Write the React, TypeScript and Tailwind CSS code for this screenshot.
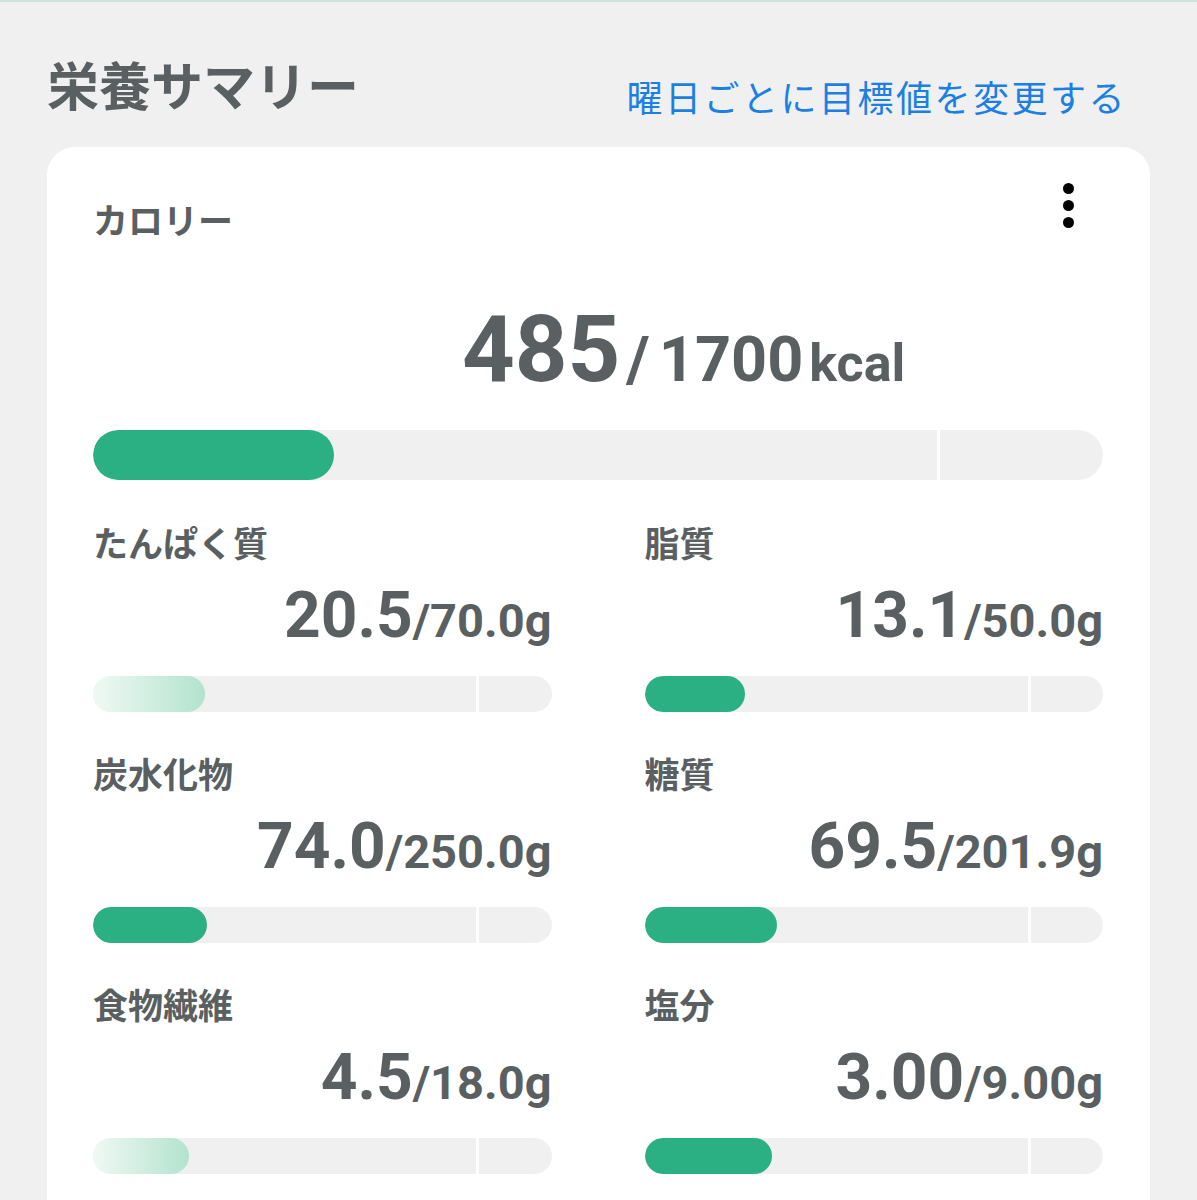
import React from "react";

type Item = {
  label: string;
  v: string;
  t: string;
  val: number;
  target: number;
  soft?: boolean;
};

const items: Item[] = [
  { label: "たんぱく質", v: "20.5", t: "70.0", val: 20.5, target: 70, soft: true },
  { label: "脂質", v: "13.1", t: "50.0", val: 13.1, target: 50 },
  { label: "炭水化物", v: "74.0", t: "250.0", val: 74, target: 250 },
  { label: "糖質", v: "69.5", t: "201.9", val: 69.5, target: 201.9 },
  { label: "食物繊維", v: "4.5", t: "18.0", val: 4.5, target: 18, soft: true },
  { label: "塩分", v: "3.00", t: "9.00", val: 3, target: 9 },
];

const MARK = 0.837;

function Bar({ ratio, soft, tall }: { ratio: number; soft?: boolean; tall?: boolean }) {
  const pct = Math.min(1, ratio * MARK) * 100;
  return (
    <div
      className={
        "relative w-full overflow-hidden rounded-full bg-[#f0f0f0] " +
        (tall ? "h-[50px]" : "h-[36px]")
      }
    >
      <div className="absolute top-0 bottom-0 left-[83.6%] w-[3px] bg-white" />
      <div
        className={
          "absolute left-0 top-0 h-full rounded-full " +
          (soft ? "bg-linear-to-r from-[#f0f9f5] to-[#b2e3ce]" : "bg-[#2bb083]")
        }
        style={{ width: `${pct}%` }}
      />
    </div>
  );
}

function Cell({ item }: { item: Item }) {
  return (
    <div className="flex flex-col">
      <div className="h-[34px] text-[35px] leading-[34px] font-bold text-[#5a5f61]">
        {item.label}
      </div>
      <div className="mt-[21px] flex h-[64px] items-baseline justify-end leading-none text-[#5a5f61]">
        <span className="text-[64px] font-bold">{item.v}</span>
        <span className="text-[47px] font-bold">/{item.t}g</span>
      </div>
      <div className="mt-[28px]">
        <Bar ratio={item.val / item.target} soft={item.soft} />
      </div>
    </div>
  );
}

export default function App() {
  return (
    <div
      className="min-h-screen w-full overflow-hidden border-t-2 border-[#cfe1db] bg-[#f0f0f0]"
      style={{ fontFamily: 'Roboto, "Noto Sans CJK JP", sans-serif' }}
    >
      <div className="flex items-start justify-between pl-[47px] pr-[70px]">
        <h1 className="mt-[62px] h-[50px] text-[52px] leading-[50px] font-bold text-[#5a5f61]">
          栄養サマリー
        </h1>
        <a className="mt-[80px] text-[36px] leading-[36px] tracking-[2.5px] text-[#1b7fe4]">
          曜日ごとに目標値を変更する
        </a>
      </div>

      <div className="mx-[47px] mt-[29px] rounded-[28px] bg-white pt-[59px] pl-[46px] pr-[47px] pb-[60px]">
        <div className="flex items-start justify-between">
          <div className="h-[34px] text-[35px] leading-[34px] font-bold text-[#5a5f61]">
            カロリー
          </div>
          <div className="mr-[29px] -mt-[23px] flex flex-col items-center gap-[6px]">
            <span className="h-[11px] w-[11px] rounded-full bg-black" />
            <span className="h-[11px] w-[11px] rounded-full bg-black" />
            <span className="h-[11px] w-[11px] rounded-full bg-black" />
          </div>
        </div>

        <div className="mt-[64px] flex h-[92px] items-baseline pl-[369px] leading-none text-[#5a5f61]">
          <span className="text-[92px] font-bold">485</span>
          <span className="ml-[6px] text-[63px] font-bold">/</span>
          <span className="ml-[9px] text-[63px] font-bold">1700</span>
          <span className="ml-[6px] text-[52px] font-bold">kcal</span>
        </div>

        <div className="mt-[34px]">
          <Bar ratio={485 / 1700} tall />
        </div>

        <div className="mt-[49px] grid grid-cols-2 gap-x-[93px] gap-y-[48px]">
          {items.map((it) => (
            <Cell key={it.label} item={it} />
          ))}
        </div>
      </div>
    </div>
  );
}
